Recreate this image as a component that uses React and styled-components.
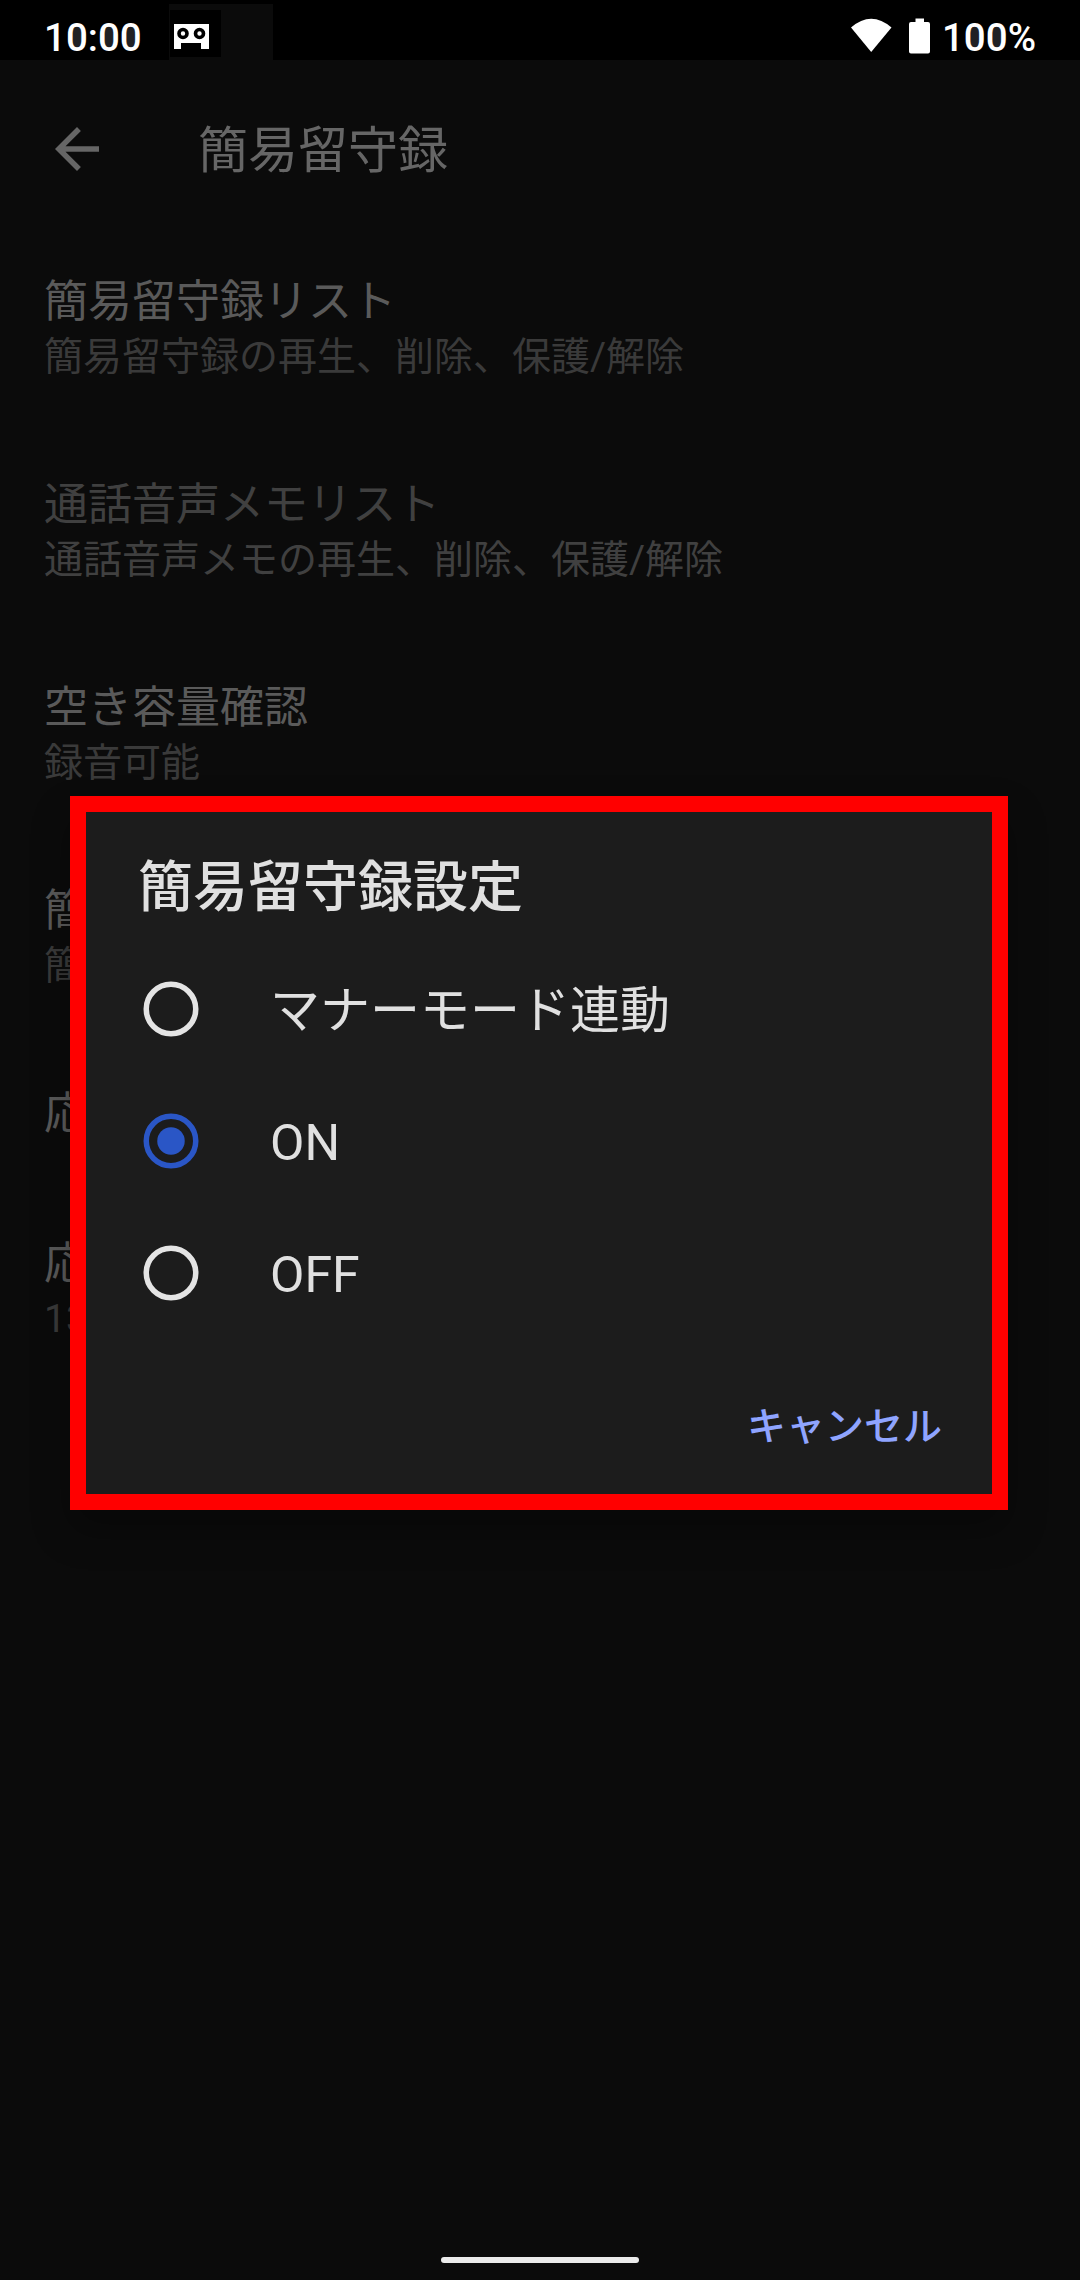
import React, { useState } from 'react'
import styled, { createGlobalStyle } from 'styled-components';


const GlobalStyle = createGlobalStyle`
  body {
    margin: 0;
    background: #0b0b0b;
    font-family: Roboto, "Noto Sans CJK JP", sans-serif;
  }
`;

const Screen = styled.div`
  position: relative;
  display: flex;
  flex-direction: column;
  width: 1080px;
  height: 2280px;
  overflow: hidden;
  background: #0b0b0b;
`;

const StatusBar = styled.div`
  display: flex;
  align-items: flex-end;
  height: 60px;
  background: #000;
`;

const StatusText = styled.span`
  align-self: flex-start;
  margin-top: 15px;
  font-size: 38.5px;
  line-height: 45px;
  font-weight: 500;
  color: #fff;
`;

const Clock = styled(StatusText)`
  width: 125px;
  padding-left: 44px;
`;

const Zero = styled.span`
  background: radial-gradient(ellipse 6px 11px at 50% 50%, #202124 96%, transparent 100%);
`;

const Notification = styled.div`
  display: flex;
  align-items: flex-start;
  width: 104px;
  height: 56px;
  background: #0b0b0b;
`;

const NotificationIcon = styled.div`
  display: flex;
  width: 51px;
  height: 47px;
  margin: 6px 0 0 1px;
  background: #000;
`;

const StatusRight = styled.div`
  display: flex;
  align-self: flex-start;
  align-items: flex-start;
  margin-left: auto;
  padding-right: 44px;
`;

const Toolbar = styled.header`
  display: flex;
  align-items: center;
  height: 167px;
`;

const BackButton = styled.button`
  display: flex;
  padding: 0;
  margin: 11px 0 0 44px;
  border: 0;
  background: none;
`;

const ToolbarTitle = styled.h1`
  margin: 15px 0 0 88px;
  font-size: 50px;
  line-height: 74px;
  font-weight: 400;
  color: #666;
`;

const Row = styled.div`
  padding: 46px 44px;
`;

const RowTitle = styled.div`
  font-size: 44px;
  line-height: 58px;
  color: ${({ $disabled }) => ($disabled ? '#404040' : '#5a5a5a')};
`;

const RowSummary = styled.div`
  font-size: 39px;
  line-height: 53px;
  color: ${({ $disabled }) => ($disabled ? '#404040' : '#3a3a3a')};
`;

const Dialog = styled.div`
  position: absolute;
  top: 796px;
  left: 70px;
  box-sizing: border-box;
  display: flex;
  flex-direction: column;
  width: 938px;
  height: 714px;
  border: 16px solid #f00;
  background: #1c1c1c;
  box-shadow: 0 20px 36px rgba(0, 0, 0, 0.3);
`;

const DialogTitle = styled.h2`
  margin: 35px 0 0 52px;
  font-size: 55px;
  line-height: 81px;
  font-weight: 500;
  color: #e0e0e0;
`;

const Options = styled.div`
  display: flex;
  flex-direction: column;
  margin-top: 15px;
`;

const Option = styled.div`
  display: flex;
  align-items: center;
  height: 132px;
  padding-left: 57px;
`;

const Radio = styled.svg`
  width: 56px;
  height: 56px;
  color: ${({ $checked }) => ($checked ? '#2a56c6' : '#e4e4e4')};
`;

const OptionLabel = styled.span`
  margin: 4px 0 0 71px;
  font-size: 50px;
  line-height: 74px;
  color: #e0e0e0;
`;

const Cancel = styled.button`
  align-self: flex-end;
  margin: 60px 50px 0 0;
  padding: 0;
  border: 0;
  background: none;
  font-family: inherit;
  font-size: 39px;
  line-height: 57px;
  font-weight: 500;
  color: #8fa4ff;
`;

const NavHandle = styled.div`
  width: 198px;
  height: 6px;
  margin: auto auto 17px;
  border-radius: 3px;
  background: #ebebeb;
`;

const rows = [
  { title: '簡易留守録リスト', summary: '簡易留守録の再生、削除、保護/解除' },
  { title: '通話音声メモリスト', summary: '通話音声メモの再生、削除、保護/解除', disabled: true },
  { title: '空き容量確認', summary: '録音可能' },
  { title: '簡', summary: '簡' },
  { title: '応' },
  { title: '応', summary: '13' },
];

const options = ['マナーモード連動', 'ON', 'OFF'];

const App = () => {
  const [selected, setSelected] = useState('ON');

  return (
    <Screen>
      <GlobalStyle />
      <StatusBar>
        <Clock>1<Zero>0</Zero>:<Zero>0</Zero><Zero>0</Zero></Clock>
        <Notification>
          <NotificationIcon>
            <svg width="51" height="47" viewBox="0 0 51 47">
              <path fill="#fff" d="M4 14h35v25h-8v-6H11v6H4z" />
              <circle cx="13" cy="23.500" r="4" fill="#fff" stroke="#000" strokeWidth="3.600" />
              <circle cx="29.500" cy="23.500" r="4" fill="#fff" stroke="#000" strokeWidth="3.600" />
            </svg>
          </NotificationIcon>
        </Notification>
        <StatusRight>
          <svg width="92" height="60" viewBox="0 0 92 60">
            <path fill="#fff" d="M1 27.500Q21.200 10 41.500 27.500L21.200 52z" />
            <path fill="#fff" d="M65.500 18.500h8.500v3.500h4q2 0 2 2v27.500q0 2-2 2H61q-2 0-2-2V24q0-2 2-2h4.500z" />
          </svg>
          <StatusText>1<Zero>0</Zero><Zero>0</Zero>%</StatusText>
        </StatusRight>
      </StatusBar>
      <Toolbar>
        <BackButton>
          <svg width="66" height="66" viewBox="0 0 24 24">
            <path fill="#666" d="M20 11H7.830l5.590-5.590L12 4l-8 8 8 8 1.410-1.410L7.830 13H20v-2z" />
          </svg>
        </BackButton>
        <ToolbarTitle>簡易留守録</ToolbarTitle>
      </Toolbar>
      {rows.map((row, i) => (
        <Row key={i}>
          <RowTitle $disabled={row.disabled}>{row.title}</RowTitle>
          {row.summary && <RowSummary $disabled={row.disabled}>{row.summary}</RowSummary>}
        </Row>
      ))}
      <NavHandle />
      <Dialog>
        <DialogTitle>簡易留守録設定</DialogTitle>
        <Options>
          {options.map((name) => (
            <Option key={name} onClick={() => setSelected(name)}>
              <Radio viewBox="0 0 56 56" $checked={name === selected}>
                <circle cx="28" cy="28" r="24.750" fill="none" stroke="currentColor" strokeWidth="5.500" />
                {name === selected && <circle cx="28" cy="28" r="13.750" fill="currentColor" />}
              </Radio>
              <OptionLabel>{name}</OptionLabel>
            </Option>
          ))}
        </Options>
        <Cancel>キャンセル</Cancel>
      </Dialog>
    </Screen>
  )
}

export default App
